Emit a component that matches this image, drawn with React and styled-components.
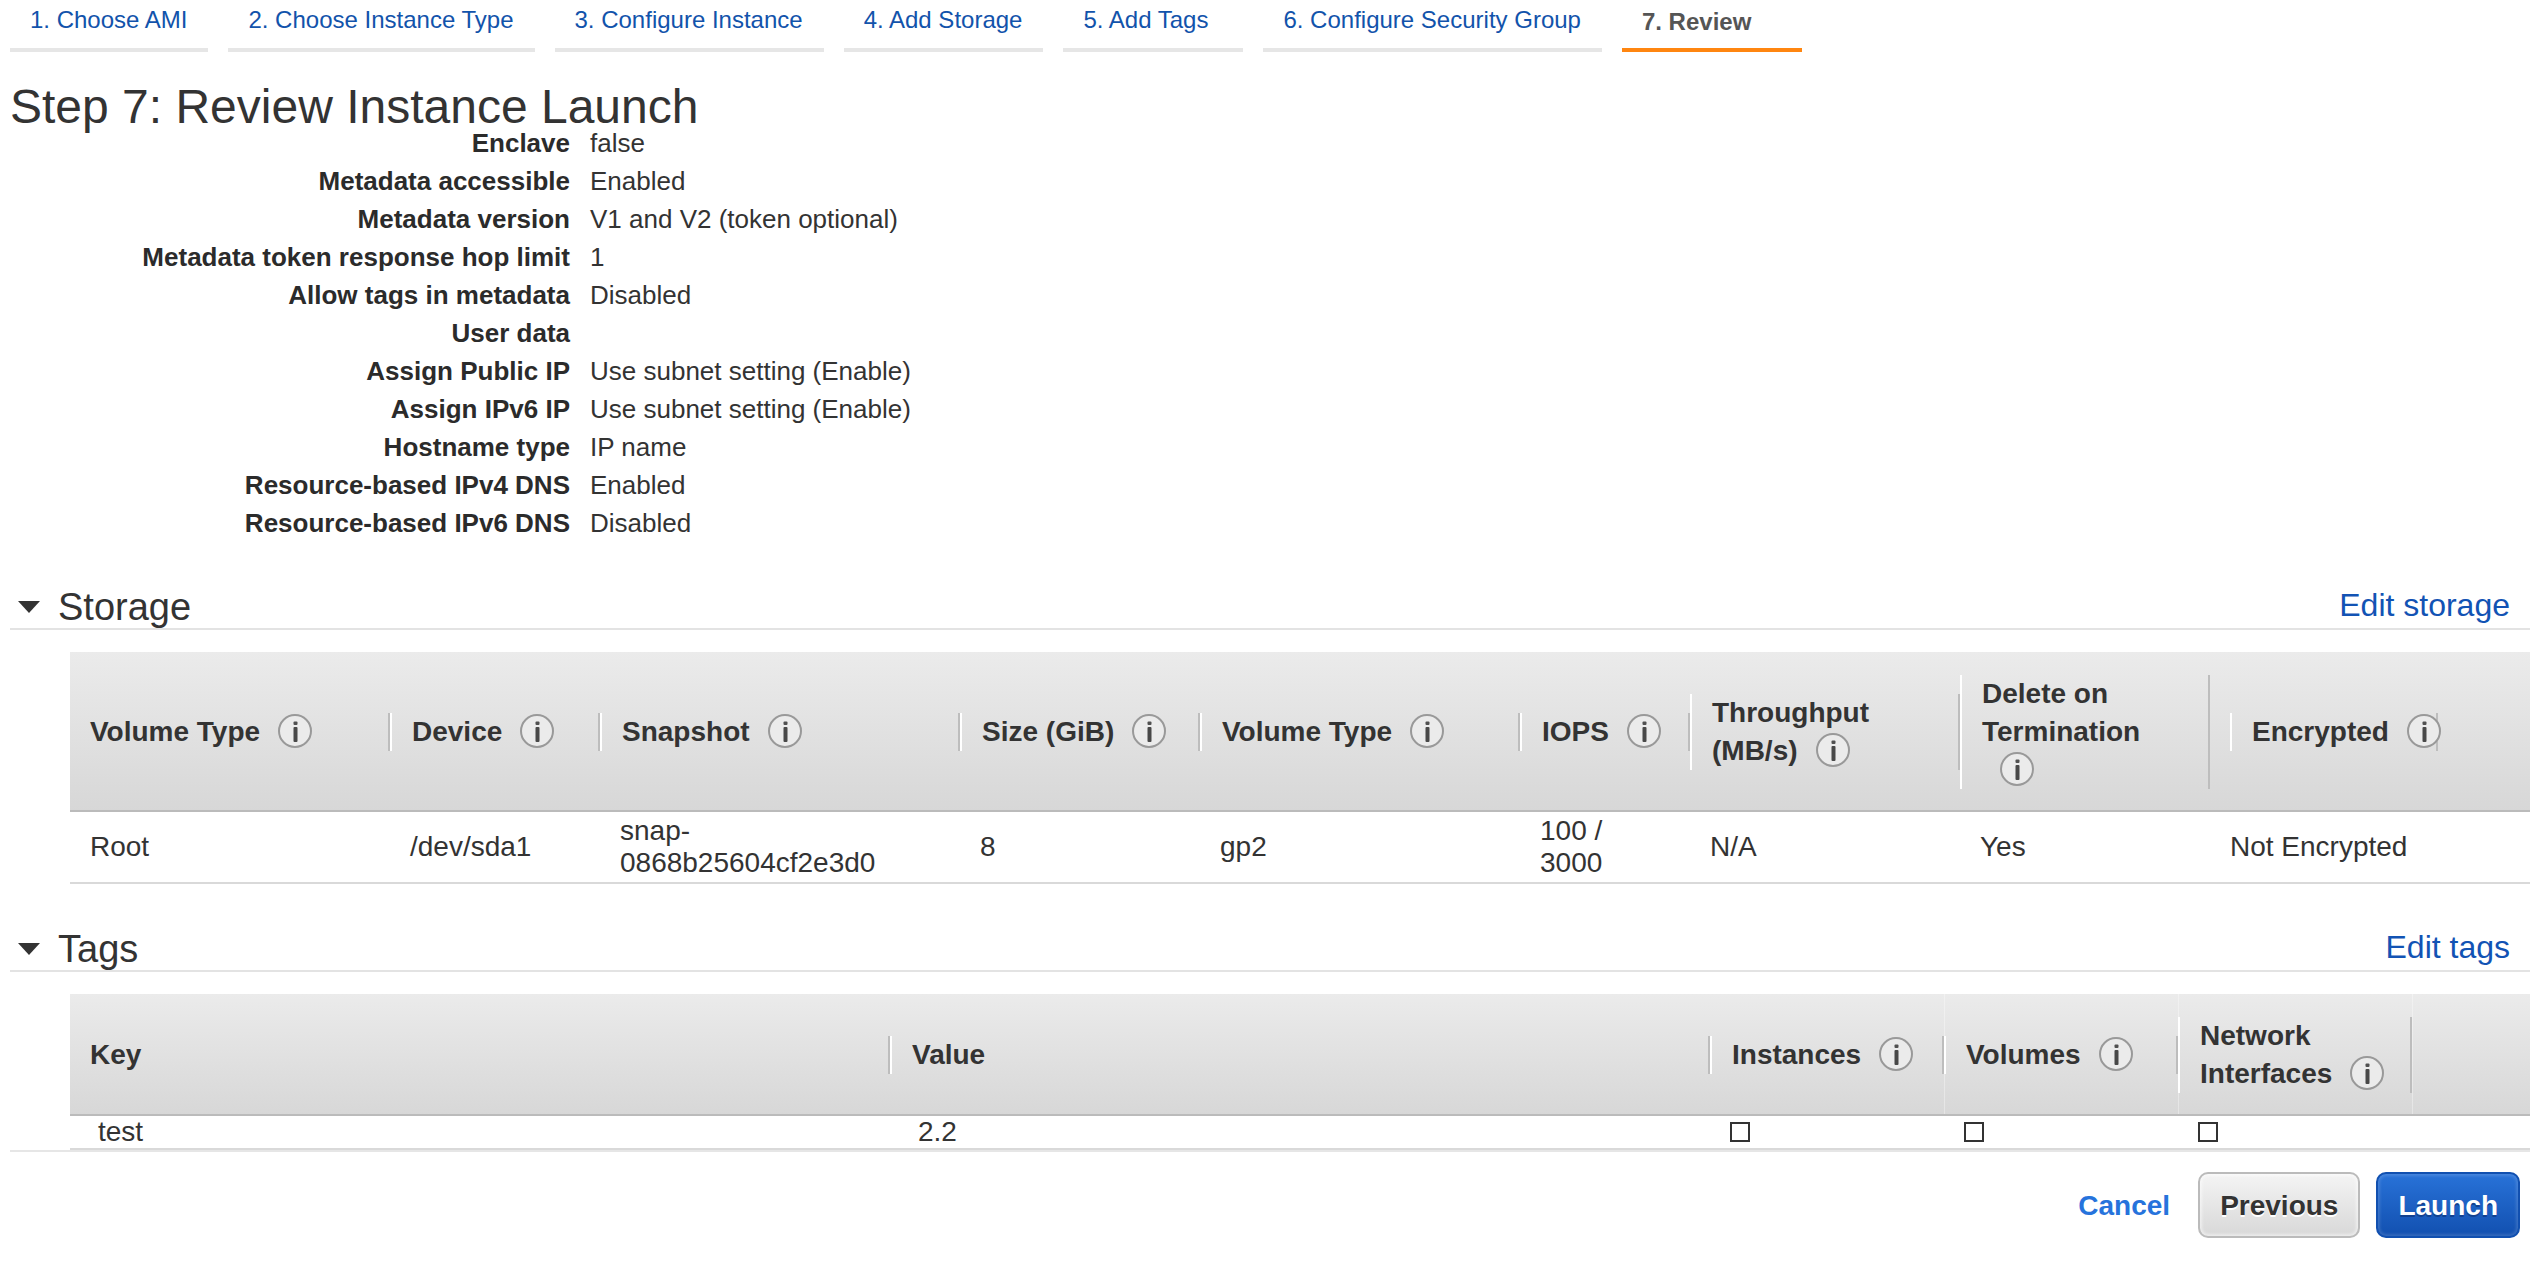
import React from "react";
import styled, { createGlobalStyle } from "styled-components";

const GlobalStyle = createGlobalStyle`
  *, *::before, *::after { box-sizing: border-box; }
  body {
    margin: 0;
    background: #fff;
    color: #333;
    font-family: "Liberation Sans", Arial, Helvetica, sans-serif;
    font-size: 28px;
  }
`;

const Page = styled.main`
  padding: 0 4px 0 10px;
`;

const Steps = styled.nav`
  display: flex;
  gap: 20px;
  height: 52px;
`;

const Step = styled.a`
  min-width: 180px;
  padding: ${(p) => (p.$current ? "8px" : "6px")} 21px 0 20px;
  border-bottom: 4px solid ${(p) => (p.$current ? "#ff8610" : "#e6e6e6")};
  color: ${(p) => (p.$current ? "#555" : "#1253ab")};
  font-size: 24px;
  font-weight: ${(p) => (p.$current ? 700 : 400)};
  line-height: 28px;
  white-space: nowrap;
  text-decoration: none;
`;

const Title = styled.h1`
  margin: 0;
  padding-top: 28px;
  font-size: 48px;
  font-weight: 400;
  line-height: 54px;
`;

const Details = styled.dl`
  display: grid;
  grid-template-columns: 560px 1fr;
  column-gap: 20px;
  grid-auto-rows: 38px;
  margin: -10px 0 0;
  font-size: 26px;
  line-height: 38px;
`;

const Term = styled.dt`
  color: #2b2b2b;
  font-weight: 700;
  text-align: right;
`;

const Value = styled.dd`
  margin: 0;
`;

const SectionHeader = styled.header`
  display: flex;
  align-items: flex-start;
  gap: 18px;
  height: 54px;
  margin-top: 34px;
  padding: 0 20px 0 8px;
  border-bottom: 2px solid #e3e3e3;
`;

const Toggle = styled.button`
  display: flex;
  align-items: center;
  gap: 18px;
  padding: 0;
  border: 0;
  background: none;
  color: inherit;
  font: inherit;
  line-height: 44px;
`;

const SectionTitle = styled.h2`
  flex: 1;
  margin: 0;
  padding-top: 9px;
  font-size: 38px;
  font-weight: 400;
`;

const EditLink = styled.a`
  padding-top: 10px;
  color: #1253b4;
  font-size: 32px;
  line-height: 38px;
  text-decoration: none;
`;

const TableWrap = styled.div`
  padding: 22px 0 0 60px;
`;

const Table = styled.table`
  width: 100%;
  table-layout: fixed;
  border-collapse: separate;
  border-spacing: 0;
`;

const HeadRow = styled.tr`
  background: linear-gradient(#ebebeb, #d7d7d7);
`;

const HeadCell = styled.th`
  padding: 23px 0 21px ${(p) => (p.$inset ? "20px" : "0")};
  border-bottom: 2px solid #bbb;
  font-weight: 700;
  line-height: 38px;
  text-align: left;
  vertical-align: middle;
  box-shadow: ${(p) => (p.$seam ? "inset 1px 0 rgba(255, 255, 255, 0.35)" : "none")};
`;

const HeadLabel = styled.div`
  width: ${(p) => (p.$narrow ? "208px" : "auto")};
  padding: 0 ${(p) => (p.$narrow ? "0" : "20px")} 0 20px;
  border-left: ${(p) => (p.$first ? "0" : "2px solid #fff")};
  border-right: 2px solid #bdbdbd;
  white-space: ${(p) => (p.$narrow ? "nowrap" : "normal")};
`;

const Cell = styled.td`
  height: ${(p) => (p.$short ? "34px" : "72px")};
  padding: 0 20px 0 ${(p) => (p.$deep ? "28px" : "20px")};
  border-bottom: 2px solid #d9d9d9;
  line-height: 32px;
  vertical-align: middle;
`;

const InfoSvg = styled.svg`
  display: inline-block;
  width: 34px;
  height: 34px;
  margin-left: 18px;
  vertical-align: -7px;
`;

const Check = styled.input`
  display: block;
  appearance: none;
  width: 20px;
  height: 20px;
  margin: 0;
  border: 2px solid #333;
  background: #fff;
`;

const Footer = styled.footer`
  display: flex;
  justify-content: flex-end;
  align-items: center;
  gap: 16px;
  padding: 20px 10px 28px;
  border-top: 2px solid #e6e6e6;
`;

const Cancel = styled.a`
  padding: 2px 12px 0 0;
  color: #2673dc;
  font-weight: 700;
  text-decoration: none;
`;

const Button = styled.button`
  height: 66px;
  padding: 2px 20px 0;
  border: 2px solid ${(p) => (p.$primary ? "#1150b0" : "#bbb")};
  border-radius: 10px;
  background: ${(p) =>
    p.$primary ? "linear-gradient(#2872d8, #1250b0)" : "linear-gradient(#f4f4f4, #d8d8d8)"};
  box-shadow: inset 0 0 3px 2px ${(p) => (p.$primary ? "rgba(255, 255, 255, 0.15)" : "rgba(255, 255, 255, 0.5)")};
  color: ${(p) => (p.$primary ? "#fff" : "#333")};
  font: 700 28px/34px "Liberation Sans", Arial, Helvetica, sans-serif;
  text-shadow: 0 2px ${(p) => (p.$primary ? "#124190" : "#fff")};
`;

const steps = [
  "1. Choose AMI",
  "2. Choose Instance Type",
  "3. Configure Instance",
  "4. Add Storage",
  "5. Add Tags",
  "6. Configure Security Group",
  "7. Review",
];

const details = [
  ["Enclave", "false"],
  ["Metadata accessible", "Enabled"],
  ["Metadata version", "V1 and V2 (token optional)"],
  ["Metadata token response hop limit", "1"],
  ["Allow tags in metadata", "Disabled"],
  ["User data", ""],
  ["Assign Public IP", "Use subnet setting (Enable)"],
  ["Assign IPv6 IP", "Use subnet setting (Enable)"],
  ["Hostname type", "IP name"],
  ["Resource-based IPv4 DNS", "Enabled"],
  ["Resource-based IPv6 DNS", "Disabled"],
];

const storageColumns = [
  { label: "Volume Type", width: 320 },
  { label: "Device", width: 210 },
  { label: "Snapshot", width: 360 },
  { label: "Size (GiB)", width: 240 },
  { label: "Volume Type", width: 320 },
  { label: "IOPS", width: 170 },
  { label: "Throughput (MB/s)", width: 270 },
  { label: "Delete on Termination", width: 250 },
  { label: "Encrypted", width: 320, inset: true },
];

const volume = [
  "Root",
  "/dev/sda1",
  "snap-0868b25604cf2e3d0",
  "8",
  "gp2",
  "100 / 3000",
  "N/A",
  "Yes",
  "Not Encrypted",
];

const tagColumns = [
  { label: "Key", width: 820, plain: true },
  { label: "Value", width: 820, plain: true },
  { label: "Instances", width: 234 },
  { label: "Volumes", width: 234, seam: true },
  { label: "Network Interfaces", width: 234, seam: true },
  { label: "", width: 118, seam: true },
];

function InfoIcon() {
  return (
    <InfoSvg viewBox="0 0 34 34" role="img" aria-label="Info">
      <circle cx="17" cy="17" r="16" fill="#ebebeb" stroke="#999" strokeWidth="2" />
      <rect x="15.5" y="7.5" width="4" height="3.5" rx="1" fill="#505050" />
      <rect x="15.5" y="13" width="4" height="15" rx="1" fill="#484848" />
    </InfoSvg>
  );
}

function Caret() {
  return (
    <svg width="22" height="12" viewBox="0 0 22 12" aria-hidden="true">
      <path d="M0 0H22L11 12Z" fill="#333" />
    </svg>
  );
}

function Section({ title, edit, children }) {
  return (
    <section>
      <SectionHeader>
        <SectionTitle>
          <Toggle type="button" aria-expanded="true">
            <Caret />
            {title}
          </Toggle>
        </SectionTitle>
        <EditLink href="#">{edit}</EditLink>
      </SectionHeader>
      <TableWrap>{children}</TableWrap>
    </section>
  );
}

function TableHead({ columns }) {
  return (
    <>
      <colgroup>
        {columns.map((c, i) => (
          <col key={i} width={c.width} />
        ))}
      </colgroup>
      <thead>
        <HeadRow>
          {columns.map((c, i) => (
            <HeadCell key={i} scope="col" $inset={c.inset} $seam={c.seam}>
              {c.label && (
                <HeadLabel $first={i === 0} $narrow={c.inset}>
                  {c.label}
                  {!c.plain && <InfoIcon />}
                </HeadLabel>
              )}
            </HeadCell>
          ))}
        </HeadRow>
      </thead>
    </>
  );
}

export default function App() {
  return (
    <>
      <GlobalStyle />
      <Page>
        <Steps aria-label="Wizard steps">
          {steps.map((s, i) => (
            <Step
              key={s}
              href="#"
              $current={i === 6}
              aria-current={i === 6 ? "step" : undefined}
            >
              {s}
            </Step>
          ))}
        </Steps>
        <Title>Step 7: Review Instance Launch</Title>
        <Details>
          {details.map(([term, value]) => (
            <React.Fragment key={term}>
              <Term>{term}</Term>
              <Value>{value}</Value>
            </React.Fragment>
          ))}
        </Details>

        <Section title="Storage" edit="Edit storage">
          <Table>
            <TableHead columns={storageColumns} />
            <tbody>
              <tr>
                {volume.map((v, i) => (
                  <Cell key={i}>{v}</Cell>
                ))}
              </tr>
            </tbody>
          </Table>
        </Section>

        <Section title="Tags" edit="Edit tags">
          <Table>
            <TableHead columns={tagColumns} />
            <tbody>
              <tr>
                <Cell $short $deep>test</Cell>
                <Cell $short $deep>2.2</Cell>
                {["Instances", "Volumes", "Network Interfaces"].map((name) => (
                  <Cell key={name} $short>
                    <Check type="checkbox" aria-label={name} />
                  </Cell>
                ))}
                <Cell $short />
              </tr>
            </tbody>
          </Table>
        </Section>

        <Footer>
          <Cancel href="#">Cancel</Cancel>
          <Button type="button">Previous</Button>
          <Button type="button" $primary>Launch</Button>
        </Footer>
      </Page>
    </>
  );
}
